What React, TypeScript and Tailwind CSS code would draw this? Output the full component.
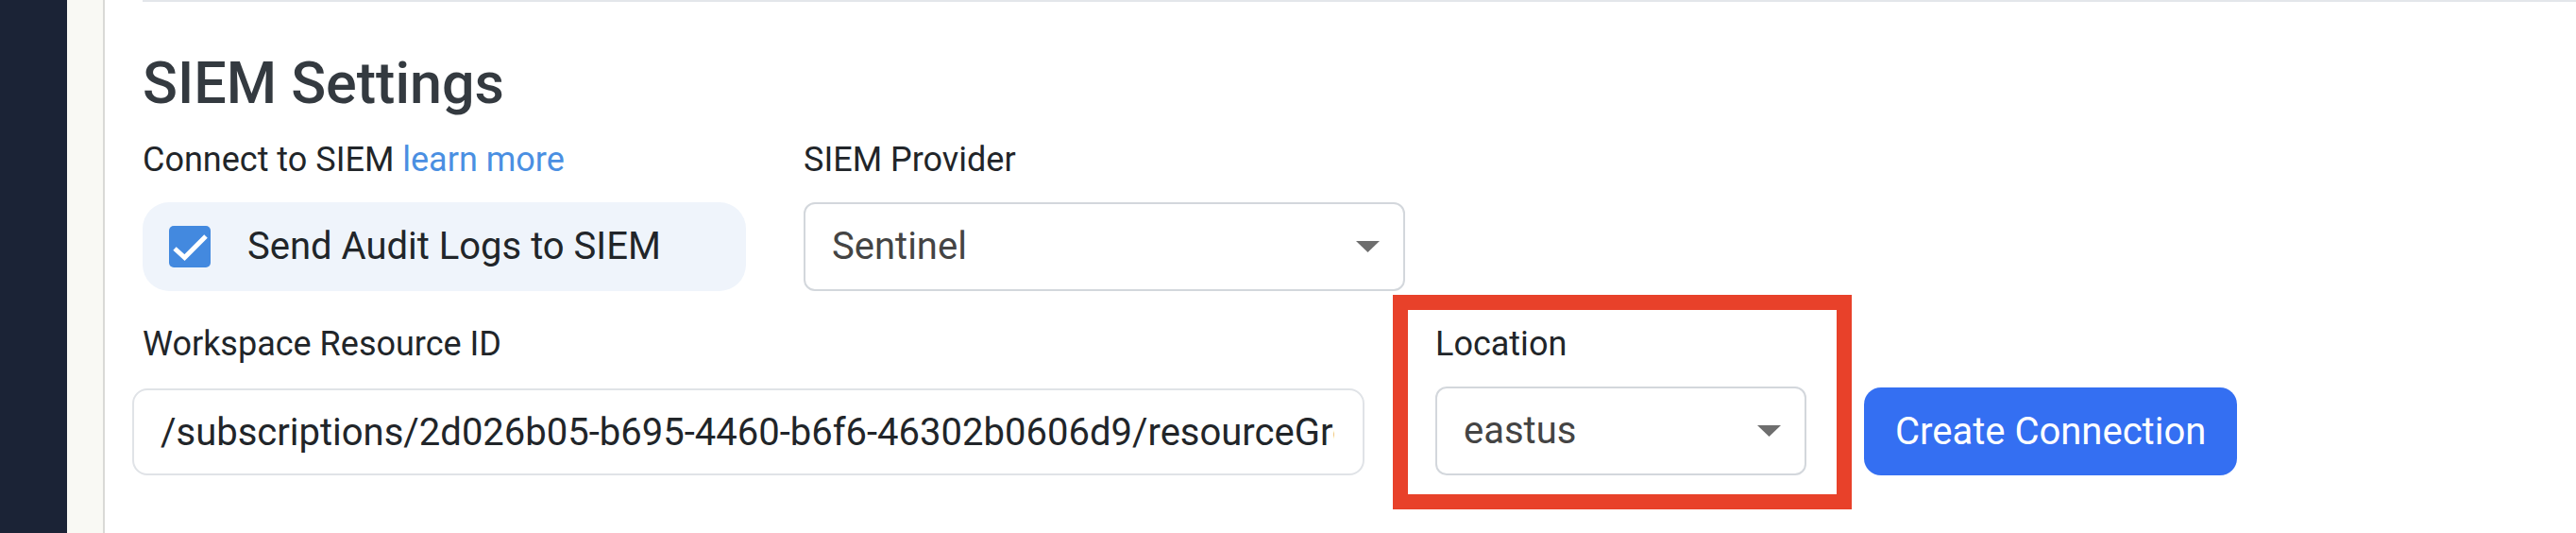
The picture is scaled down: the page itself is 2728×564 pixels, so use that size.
import React from 'react';

const workspaceId =
  '/subscriptions/2d026b05-b695-4460-b6f6-46302b0606d9/resourceGroups/siem-rg/providers/Microsoft.OperationalInsights/workspaces/siem-workspace';

const Caret: React.FC = () => (
  <svg width="25" height="12" viewBox="0 0 25 12" className="shrink-0">
    <path d="M0 0 H25 L12.5 12 Z" fill="#6e6e6e" />
  </svg>
);

const SiemSettings: React.FC = () => {
  return (
    <div
      className="min-h-screen flex bg-white"
      style={{ fontFamily: 'Roboto, "Liberation Sans", sans-serif' }}
    >
      {/* Sidebar */}
      <aside className="w-[71px] shrink-0 bg-[#1b2336]" />
      <div className="w-[40px] shrink-0 bg-[#f9f9f4] border-r-2 border-[#d9d9d6]" />

      {/* Main Content */}
      <main className="flex-1 pl-[40px]">
        <section className="border-t-2 border-[#e3e6ea]">
          <h1 className="mt-[50px] text-[61px] leading-[72px] font-medium text-[#343a40]">
            SIEM Settings
          </h1>

          {/* Connect + provider */}
          <div className="mt-[18px] flex">
            <div className="w-[639px]">
              <div className="text-[36px] leading-[54px] text-[#212529]">
                Connect to SIEM <a className="text-[#4a8fe2]">learn more</a>
              </div>
              <label className="mt-[18px] h-[94px] flex items-center rounded-[28px] bg-[#eff4fb] pl-[28px]">
                <span className="w-[44px] h-[44px] rounded-[5px] bg-[#4389df] flex items-center justify-center">
                  <svg width="44" height="44" viewBox="0 0 44 44">
                    <path
                      d="M6 24 L16.5 33.5 L39 11"
                      fill="none"
                      stroke="white"
                      strokeWidth="5"
                    />
                  </svg>
                </span>
                <span className="ml-[39px] text-[40px] text-[#212529]">
                  Send Audit Logs to SIEM
                </span>
              </label>
            </div>

            <div className="ml-[61px] w-[637px]">
              <div className="text-[36px] leading-[54px] text-[#212529]">SIEM Provider</div>
              <div className="mt-[18px] h-[94px] flex items-center justify-between rounded-[12px] border-2 border-[#d3d7dc] pl-[28px] pr-[25px]">
                <span className="text-[40px] text-[#444]">Sentinel</span>
                <Caret />
              </div>
            </div>
          </div>

          {/* Workspace + location + button */}
          <div className="mt-[29px] -ml-[11px] flex items-end">
            <div className="w-[1305px]">
              <div className="pl-[11px] text-[36px] leading-[54px] text-[#212529]">
                Workspace Resource ID
              </div>
              <input
                readOnly
                value={workspaceId}
                className="mt-[20px] w-full h-[92px] rounded-[16px] border-2 border-[#e0e3e7] pl-[28px] pr-[30px] text-[40px] text-[#212529] outline-none"
              />
            </div>

            <div className="relative ml-[75px] w-[393px]">
              <div className="text-[36px] leading-[54px] text-[#212529]">Location</div>
              <div className="mt-[18px] h-[94px] flex items-center justify-between rounded-[12px] border-2 border-[#d3d7dc] pl-[28px] pr-[25px]">
                <span className="text-[40px] text-[#444]">eastus</span>
                <Caret />
              </div>
              {/* highlight annotation */}
              <span className="pointer-events-none absolute -left-[45px] -right-[48px] -top-[25px] -bottom-[36px] border-[16px] border-[#e8412a]" />
            </div>

            <button className="ml-[61px] h-[93px] px-[33px] rounded-[18px] bg-[#346ff2] text-[40px] text-white">
              Create Connection
            </button>
          </div>
        </section>
      </main>
    </div>
  );
};

export default function App() {
  return <SiemSettings />;
}
